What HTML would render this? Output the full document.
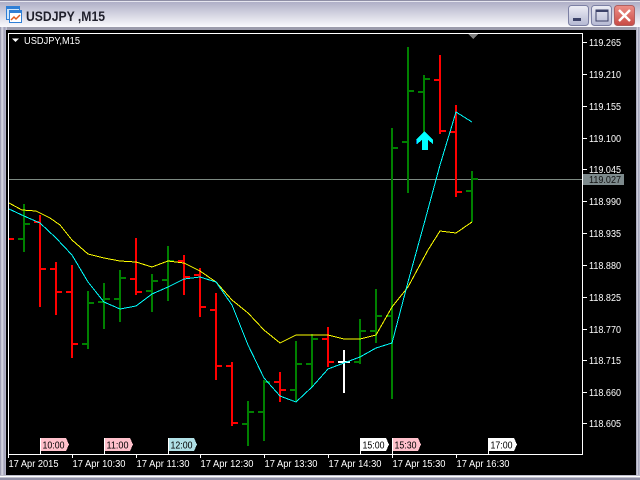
<!DOCTYPE html>
<html><head><meta charset="utf-8"><style>
html,body{margin:0;padding:0;background:#000}
svg{display:block}
text{font-family:"Liberation Sans",sans-serif;font-size:10px}
</style></head><body>
<svg width="640" height="480" viewBox="0 0 640 480" xmlns="http://www.w3.org/2000/svg">
<defs>
<linearGradient id="t" x1="0" y1="0" x2="0" y2="1"><stop offset="0" stop-color="#a9a9c2"/><stop offset=".5" stop-color="#d2d2e0"/><stop offset="1" stop-color="#fbfbfd"/></linearGradient>
<linearGradient id="s" x1="0" y1="0" x2="1" y2="0"><stop offset="0" stop-color="#8c8ca4"/><stop offset=".3" stop-color="#dcdce6"/><stop offset=".6" stop-color="#a0a0b8"/><stop offset="1" stop-color="#c8c8d6"/></linearGradient>
<linearGradient id="b" x1="0" y1="0" x2="0" y2="1"><stop offset="0" stop-color="#eeeef6"/><stop offset="1" stop-color="#b4b8d2"/></linearGradient>
<linearGradient id="c" x1="0" y1="0" x2="0" y2="1"><stop offset="0" stop-color="#ee9088"/><stop offset="1" stop-color="#c84a44"/></linearGradient>
</defs>
<rect width="640" height="480" fill="#b4b4c6"/>
<rect width="640" height="27" fill="url(#t)"/>
<rect width="640" height="1" fill="#8f8fa6"/>
<rect y="1" width="640" height="1" fill="#e6e6ef"/>
<rect y="27" width="640" height="3" fill="#9c9cac"/>
<rect x="0" y="27" width="7" height="453" fill="url(#s)"/>
<rect x="636" y="27" width="4" height="453" fill="url(#s)"/>
<rect y="475" width="640" height="5" fill="#c0c0ce"/>
<rect y="476" width="640" height="1" fill="#fff"/>
<rect y="478" width="640" height="2" fill="#8f8fa6"/>
<rect x="6" y="30" width="630" height="445" fill="#000"/>

<!-- icon -->
<rect x="6.500" y="6.500" width="13" height="13" fill="#cfe6fb" stroke="#2f7fd6" shape-rendering="crispEdges"/>
<rect x="6" y="6" width="14" height="3" fill="#2f7fd6" shape-rendering="crispEdges"/>
<rect x="9.500" y="10.500" width="12" height="12" fill="#fff" stroke="#2f7fd6" shape-rendering="crispEdges"/>
<rect x="9" y="10" width="13" height="3" fill="#2f7fd6" shape-rendering="crispEdges"/>
<path d="M11 20L14 17 16 19 20 15" fill="none" stroke="#e05a20" stroke-width="1.500"/>
<text x="26" y="21" textLength="79" lengthAdjust="spacingAndGlyphs" style="font-size:14px;font-weight:bold;fill:#20202c">USDJPY ,M15</text>

<!-- window buttons -->
<rect x="568.500" y="5.500" width="20" height="20" rx="3" fill="url(#b)" stroke="#7c80a4"/>
<rect x="573" y="18" width="8" height="3" fill="#3c4268"/>
<rect x="591.500" y="5.500" width="20" height="20" rx="3" fill="url(#b)" stroke="#7c80a4"/>
<rect x="596" y="10" width="12" height="11" fill="none" stroke="#3c4268" stroke-width="1"/>
<rect x="596" y="10" width="12" height="2" fill="#3c4268"/>
<rect x="614.500" y="5.500" width="20" height="20" rx="3" fill="url(#c)" stroke="#b06060"/>
<path d="M619 10L630 21M630 10L619 21" stroke="#fff" stroke-width="2.400" fill="none"/>

<g shape-rendering="crispEdges">
<!-- chart box -->
<path d="M8.500 33.500H582.500V454.500H8.500Z" fill="none" stroke="#fff"/>
<rect x="9" y="179" width="573" height="1" fill="#7d8a82"/>
<!-- bars -->
<path fill="#008000" d="
M23 204h2V252h-2zM18 238h5v2h-5zM25 223h5v2h-5z
M87 291h2V349h-2zM82 343h5v2h-5zM89 302h5v2h-5z
M103 283h2V329h-2zM98 301h5v2h-5zM105 298h5v2h-5z
M119 270h2V322h-2zM114 298h5v2h-5zM121 277h5v2h-5z
M151 274h2V312h-2zM146 290h5v2h-5zM153 280h5v2h-5z
M167 246h2V301h-2zM162 279h5v2h-5zM169 260h5v2h-5z
M247 401h2V446h-2zM242 423h5v2h-5zM249 411h5v2h-5z
M263 380h2V441h-2zM258 411h5v2h-5zM265 381h5v2h-5z
M295 341h2V401h-2zM290 389h5v2h-5zM297 363h5v2h-5z
M311 334h2V387h-2zM306 363h5v2h-5zM313 338h5v2h-5z
M359 319h2V364h-2zM354 361h5v2h-5zM361 330h5v2h-5z
M375 289h2V343h-2zM370 330h5v2h-5zM377 315h5v2h-5z
M391 128h2V399h-2zM386 315h5v2h-5zM393 147h5v2h-5z
M407 47h2V193h-2zM402 141h5v2h-5zM409 90h5v2h-5z
M423 75h2V135h-2zM418 91h5v2h-5zM425 78h5v2h-5z
M471 171h2V222h-2zM466 190h5v2h-5zM473 178h5v2h-5z"/>
<path fill="#f00" d="
M9 238h5v2h-5z
M39 215h2V307h-2zM34 221h5v2h-5zM41 268h5v2h-5z
M55 262h2V315h-2zM50 268h5v2h-5zM57 291h5v2h-5z
M71 265h2V358h-2zM66 291h5v2h-5zM73 343h5v2h-5z
M135 238h2V295h-2zM130 278h5v2h-5zM137 291h5v2h-5z
M183 255h2V295h-2zM178 260h5v2h-5zM185 276h5v2h-5z
M199 268h2V317h-2zM194 274h5v2h-5zM201 306h5v2h-5z
M215 293h2V380h-2zM210 309h5v2h-5zM217 365h5v2h-5z
M231 362h2V426h-2zM226 365h5v2h-5zM233 422h5v2h-5z
M279 372h2V402h-2zM274 381h5v2h-5zM281 389h5v2h-5z
M327 327h2V367h-2zM322 338h5v2h-5zM329 361h5v2h-5z
M439 55h2V134h-2zM434 79h5v2h-5zM441 130h5v2h-5z
M455 105h2V197h-2zM450 131h5v2h-5zM457 191h5v2h-5z"/>
<path fill="#fff" d="M343 350h2V393h-2zM338 361h12v2h-12z"/>
<!-- MAs -->
<polyline fill="none" stroke="#ff0" stroke-width="1" points="9,203 22,210 36,211 50,218 60,225 72,240 88,254 104,258 120,261 136,262 152,267 168,261 184,263 200,271 216,282 232,300 248,313 264,330 280,343 296,335 328,335 344,339 360,339 376,335 392,307 408,287 428,250 440,231 456,233 472,222"/>
<polyline fill="none" stroke="#0ff" stroke-width="1" points="9,209 24,216 40,223 56,238 72,255 88,282 104,302 120,309 136,306 152,294 168,287 184,279 200,277 216,282 232,305 248,345 264,378 280,396 296,402 312,387 328,369 344,363 360,357 376,348 392,343 408,282 424,224 440,165 456,112 472,122"/>
<!-- axis ticks -->
<path fill="none" stroke="#fff" d="M583 42.500H587M583 74.500H587M583 106.500H587M583 138.500H587M583 169.500H587M583 201.500H587M583 233.500H587M583 265.500H587M583 297.500H587M583 329.500H587M583 360.500H587M583 392.500H587M583 423.500H587
M8.500 455V458M72.500 455V458M136.500 455V458M200.500 455V458M264.500 455V458M328.500 455V458M392.500 455V458M456.500 455V458
M40.500 438V454M104.500 438V454M168.500 438V454M360.500 438V454M392.500 438V454M488.500 438V454"/>
</g>
<!-- arrow -->
<polygon points="416,140 424.500,131 433,140 433,144 428,140 428,150 422,150 422,140 417,144" fill="#0ff" shape-rendering="crispEdges"/>
<polygon points="416,140 417,139 417,144 416,144" fill="#0060c0" shape-rendering="crispEdges"/>
<polygon points="468,34 478,34 473,39" fill="#808080" shape-rendering="crispEdges"/>
<polygon points="12,38.500 19,38.500 15.500,42" fill="#fff"/>
<text x="24" y="44" textLength="56" lengthAdjust="spacingAndGlyphs" fill="#fff">USDJPY,M15</text>

<!-- price axis -->
<g fill="#fff">
<text x="589" y="46" textLength="32" lengthAdjust="spacingAndGlyphs">119.265</text>
<text x="589" y="78" textLength="32" lengthAdjust="spacingAndGlyphs">119.210</text>
<text x="589" y="110" textLength="32" lengthAdjust="spacingAndGlyphs">119.155</text>
<text x="589" y="142" textLength="32" lengthAdjust="spacingAndGlyphs">119.100</text>
<text x="589" y="173" textLength="32" lengthAdjust="spacingAndGlyphs">119.045</text>
<text x="589" y="205" textLength="32" lengthAdjust="spacingAndGlyphs">118.990</text>
<text x="589" y="237" textLength="32" lengthAdjust="spacingAndGlyphs">118.935</text>
<text x="589" y="269" textLength="32" lengthAdjust="spacingAndGlyphs">118.880</text>
<text x="589" y="301" textLength="32" lengthAdjust="spacingAndGlyphs">118.825</text>
<text x="589" y="333" textLength="32" lengthAdjust="spacingAndGlyphs">118.770</text>
<text x="589" y="364" textLength="32" lengthAdjust="spacingAndGlyphs">118.715</text>
<text x="589" y="396" textLength="32" lengthAdjust="spacingAndGlyphs">118.660</text>
<text x="589" y="427" textLength="32" lengthAdjust="spacingAndGlyphs">118.605</text>
</g>
<rect x="583" y="174" width="41" height="11" fill="#7d8a8c" shape-rendering="crispEdges"/>
<text x="589" y="183" textLength="32" lengthAdjust="spacingAndGlyphs" fill="#111">119.027</text>

<!-- time axis -->
<g fill="#fff">
<text x="8.500" y="467" textLength="50" lengthAdjust="spacingAndGlyphs">17 Apr 2015</text>
<text x="72.500" y="467" textLength="53" lengthAdjust="spacingAndGlyphs">17 Apr 10:30</text>
<text x="136.500" y="467" textLength="53" lengthAdjust="spacingAndGlyphs">17 Apr 11:30</text>
<text x="200.500" y="467" textLength="53" lengthAdjust="spacingAndGlyphs">17 Apr 12:30</text>
<text x="264.500" y="467" textLength="53" lengthAdjust="spacingAndGlyphs">17 Apr 13:30</text>
<text x="328.500" y="467" textLength="53" lengthAdjust="spacingAndGlyphs">17 Apr 14:30</text>
<text x="392.500" y="467" textLength="53" lengthAdjust="spacingAndGlyphs">17 Apr 15:30</text>
<text x="456.500" y="467" textLength="53" lengthAdjust="spacingAndGlyphs">17 Apr 16:30</text>
</g>

<!-- session tags -->
<g shape-rendering="crispEdges">
<path d="M41 438H66L69 444.500 66 451H41Z" fill="#ffc0cb"/>
<path d="M105 438H130L133 444.500 130 451H105Z" fill="#ffc0cb"/>
<path d="M169 438H194L197 444.500 194 451H169Z" fill="#b0e0e6"/>
<path d="M361 438H386L389 444.500 386 451H361Z" fill="#fff"/>
<path d="M393 438H418L421 444.500 418 451H393Z" fill="#ffc0cb"/>
<path d="M489 438H514L517 444.500 514 451H489Z" fill="#fff"/>
</g>
<g fill="#000">
<text x="42.500" y="448.500" textLength="22" lengthAdjust="spacingAndGlyphs">10:00</text>
<text x="106.500" y="448.500" textLength="22" lengthAdjust="spacingAndGlyphs">11:00</text>
<text x="170.500" y="448.500" textLength="22" lengthAdjust="spacingAndGlyphs">12:00</text>
<text x="362.500" y="448.500" textLength="22" lengthAdjust="spacingAndGlyphs">15:00</text>
<text x="394.500" y="448.500" textLength="22" lengthAdjust="spacingAndGlyphs">15:30</text>
<text x="490.500" y="448.500" textLength="22" lengthAdjust="spacingAndGlyphs">17:00</text>
</g>
</svg>
</body></html>
